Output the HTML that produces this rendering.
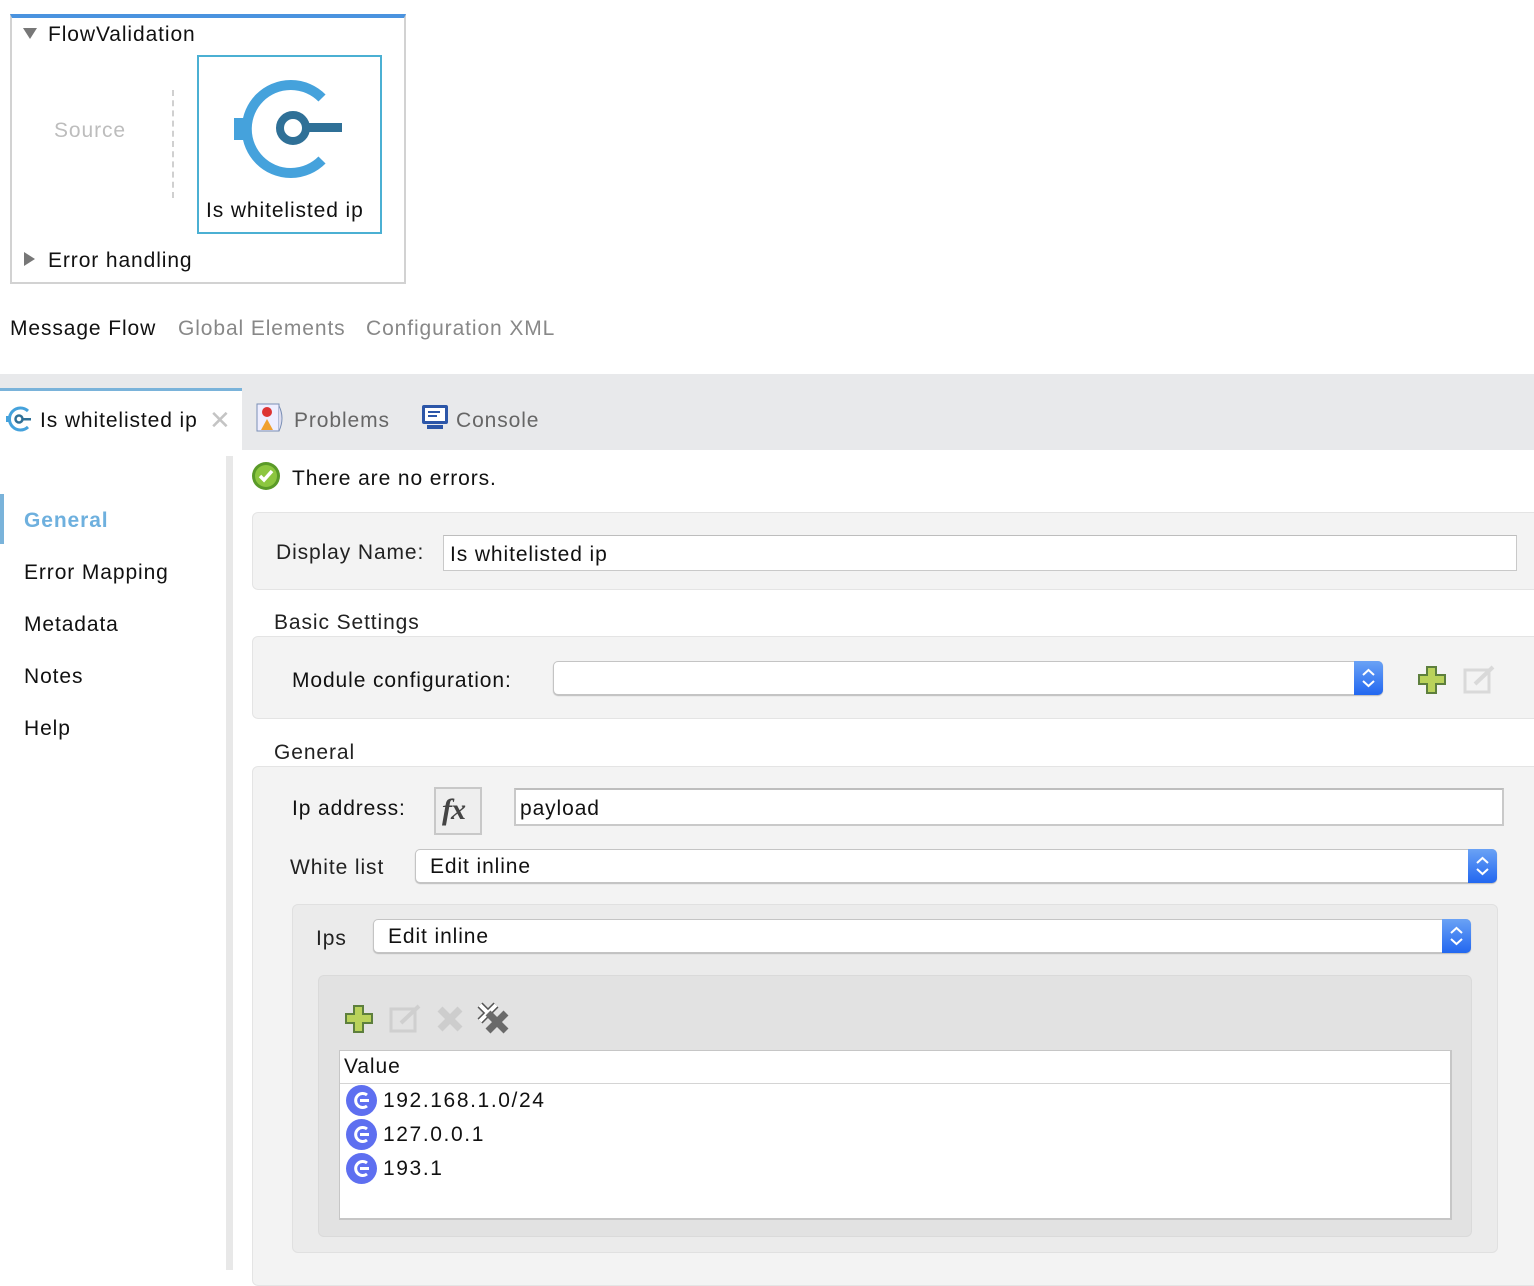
<!DOCTYPE html>
<html><head><meta charset="utf-8"><style>
*{box-sizing:border-box;margin:0;padding:0}
body{width:1534px;height:1270px;position:relative;background:#fff;font-family:"Liberation Sans",sans-serif;font-size:21px;color:#111;overflow:hidden;letter-spacing:0.9px}
.a{position:absolute}
.t{position:absolute;white-space:nowrap;line-height:1}
.panel{position:absolute;background:#f3f3f3;border:1px solid #e4e4e4;border-radius:6px}
.inp{position:absolute;background:#fff;border:2px solid #c9c9c9;border-top-color:#bdbdbd}
.sel{position:absolute;background:#fff;border:1px solid #c4c4c4;border-radius:5px;box-shadow:0 1px 1px #bbb}
.step{position:absolute;right:-1px;top:-1px;bottom:-1px;width:29px;border-radius:0 5px 5px 0;background:linear-gradient(#6aa2f5,#2267f0)}
.step svg{position:absolute;left:7px;top:7px}
.ci{position:absolute;width:31px;height:31px;border-radius:50%;background:#5e6ff0}
</style></head><body>

<!-- flow box -->
<div class="a" style="left:10px;top:14px;width:396px;height:270px;border:2px solid #d2d2d2;border-top:4px solid #4a93df"></div>
<div class="a" style="left:23px;top:28px;width:0;height:0;border-left:7px solid transparent;border-right:7px solid transparent;border-top:11px solid #777"></div>
<div class="t" style="left:48px;top:24px">FlowValidation</div>
<div class="t" style="left:54px;top:120px;color:#bdbdbd">Source</div>
<div class="a" style="left:172px;top:90px;height:108px;border-left:2px dashed #d0d0d0"></div>
<div class="a" style="left:197px;top:55px;width:185px;height:179px;border:2px solid #4bb0d3"></div>
<svg class="a" style="left:232px;top:78px" width="112" height="102" viewBox="0 0 112 102">
<path d="M90 20 A44 44 0 1 0 90 82" fill="none" stroke="#45a2dc" stroke-width="10"/>
<rect x="2" y="40" width="14" height="22" fill="#45a2dc"/>
<circle cx="61" cy="50" r="13" fill="none" stroke="#2f7097" stroke-width="8"/>
<rect x="72" y="45" width="38" height="9" fill="#2f7097"/>
</svg>
<div class="t" style="left:206px;top:200px">Is whitelisted ip</div>
<div class="a" style="left:24px;top:252px;width:0;height:0;border-top:7px solid transparent;border-bottom:7px solid transparent;border-left:11px solid #777"></div>
<div class="t" style="left:48px;top:250px">Error handling</div>

<div class="t" style="left:10px;top:318px">Message Flow</div>
<div class="t" style="left:178px;top:318px;color:#888">Global Elements</div>
<div class="t" style="left:366px;top:318px;color:#888">Configuration XML</div>

<!-- bottom tab bar -->
<div class="a" style="left:0;top:374px;width:1534px;height:76px;background:#e8e9eb"></div>
<div class="a" style="left:0;top:388px;width:242px;height:62px;background:#fff;border-top:3px solid #7ab3da"></div>
<svg class="a" style="left:4px;top:405px" width="30" height="28" viewBox="0 0 30 28">
<path d="M24 6 A11 11 0 1 0 24 22" fill="none" stroke="#45a2dc" stroke-width="3"/>
<rect x="2" y="11" width="4" height="6" fill="#45a2dc"/>
<circle cx="15" cy="14" r="3.5" fill="none" stroke="#2f7097" stroke-width="2.5"/><rect x="18" y="13" width="9" height="2.5" fill="#2f7097"/>
</svg>
<div class="t" style="left:40px;top:410px">Is whitelisted ip</div>
<div class="t" style="left:209px;top:407px;font-size:26px;color:#c4c4c4">✕</div>
<svg class="a" style="left:256px;top:403px" width="30" height="30" viewBox="0 0 30 30">
<rect x="1" y="1" width="22" height="27" fill="#eef" stroke="#7a8fb5"/><path d="M23 3 q6 12 0 25" fill="#dde" stroke="#7a8fb5"/>
<circle cx="11" cy="9" r="5" fill="#d33"/><path d="M5 27 L11 16 L17 27Z" fill="#f0a030"/></svg>
<div class="t" style="left:294px;top:410px;color:#666">Problems</div>
<svg class="a" style="left:421px;top:404px" width="28" height="26" viewBox="0 0 28 26">
<rect x="1" y="1" width="26" height="19" rx="2" fill="#2c56a8"/><rect x="4" y="4" width="20" height="13" fill="#fff"/>
<rect x="7" y="7" width="12" height="2" fill="#2c56a8"/><rect x="7" y="11" width="9" height="2" fill="#2c56a8"/><rect x="6" y="21" width="16" height="4" fill="#2c56a8"/></svg>
<div class="t" style="left:456px;top:410px;color:#666">Console</div>

<!-- sidebar -->
<div class="a" style="left:226px;top:456px;width:7px;height:814px;background:#e8e8e8"></div>
<div class="a" style="left:0;top:494px;width:4px;height:50px;background:#7ab3da"></div>
<div class="t" style="left:24px;top:510px;color:#6eb0de;font-weight:bold">General</div>
<div class="t" style="left:24px;top:562px">Error Mapping</div>
<div class="t" style="left:24px;top:614px">Metadata</div>
<div class="t" style="left:24px;top:666px">Notes</div>
<div class="t" style="left:24px;top:718px">Help</div>

<!-- content -->
<svg class="a" style="left:251px;top:461px" width="30" height="30" viewBox="0 0 30 30">
<circle cx="15" cy="15" r="14" fill="#5a9a28"/><circle cx="15" cy="15" r="11" fill="#8cc63f"/>
<path d="M9 15 L13 19 L21 10" fill="none" stroke="#fff" stroke-width="3.5"/></svg>
<div class="t" style="left:292px;top:468px">There are no errors.</div>

<div class="panel" style="left:252px;top:512px;width:1300px;height:78px"></div>
<div class="t" style="left:276px;top:542px;color:#222">Display Name:</div>
<div class="inp" style="left:443px;top:535px;width:1074px;height:36px;border-width:1px"></div>
<div class="t" style="left:450px;top:544px">Is whitelisted ip</div>

<div class="t" style="left:274px;top:612px;color:#222">Basic Settings</div>
<div class="panel" style="left:252px;top:636px;width:1300px;height:83px"></div>
<div class="t" style="left:292px;top:670px">Module configuration:</div>
<div class="sel" style="left:553px;top:661px;width:830px;height:34px"><div class="step"><svg width="15" height="20" viewBox="0 0 15 20"><path d="M2 7L7.5 2L13 7M2 13L7.5 18L13 13" fill="none" stroke="#fff" stroke-width="2"/></svg></div></div>
<svg class="a" style="left:1418px;top:666px" width="28" height="28" viewBox="0 0 28 28"><path d="M9 1h9v8h9v9h-9v9h-9v-9h-8v-9h8z" fill="#b9d25a" stroke="#5d7f3d" stroke-width="2"/></svg>
<svg class="a" style="left:1463px;top:664px" width="32" height="30" viewBox="0 0 32 30"><rect x="2" y="6" width="24" height="22" fill="none" stroke="#d9d9d9" stroke-width="3"/><path d="M12 20 L30 3" stroke="#d9d9d9" stroke-width="4"/></svg>

<div class="t" style="left:274px;top:742px;color:#222">General</div>
<div class="panel" style="left:252px;top:766px;width:1300px;height:520px"></div>
<div class="t" style="left:292px;top:798px">Ip address:</div>
<div class="a" style="left:434px;top:787px;width:48px;height:48px;background:#eee;border:2px solid #c8c8c8"></div>
<div class="t" style="left:442px;top:795px;font-family:'Liberation Serif',serif;font-style:italic;font-weight:bold;font-size:30px;color:#444;letter-spacing:-1px">fx</div>
<div class="inp" style="left:514px;top:788px;width:990px;height:38px"></div>
<div class="t" style="left:520px;top:798px">payload</div>

<div class="t" style="left:290px;top:857px;color:#222">White list</div>
<div class="sel" style="left:415px;top:849px;width:1082px;height:34px"><div class="step"><svg width="15" height="20" viewBox="0 0 15 20"><path d="M2 7L7.5 2L13 7M2 13L7.5 18L13 13" fill="none" stroke="#fff" stroke-width="2"/></svg></div></div>
<div class="t" style="left:430px;top:856px">Edit inline</div>

<div class="a" style="left:292px;top:904px;width:1206px;height:349px;background:#ebebeb;border:1px solid #e0e0e0;border-radius:6px"></div>
<div class="t" style="left:316px;top:928px;color:#222">Ips</div>
<div class="sel" style="left:373px;top:919px;width:1098px;height:34px"><div class="step"><svg width="15" height="20" viewBox="0 0 15 20"><path d="M2 7L7.5 2L13 7M2 13L7.5 18L13 13" fill="none" stroke="#fff" stroke-width="2"/></svg></div></div>
<div class="t" style="left:388px;top:926px">Edit inline</div>

<div class="a" style="left:318px;top:975px;width:1154px;height:262px;background:#e2e2e2;border:1px solid #dadada;border-radius:6px"></div>
<svg class="a" style="left:345px;top:1005px" width="28" height="28" viewBox="0 0 28 28"><path d="M9 1h9v8h9v9h-9v9h-9v-9h-8v-9h8z" fill="#b9d25a" stroke="#5d7f3d" stroke-width="2"/></svg>
<svg class="a" style="left:389px;top:1003px" width="32" height="30" viewBox="0 0 32 30"><rect x="2" y="6" width="24" height="22" fill="none" stroke="#cfcfcf" stroke-width="3"/><path d="M12 20 L30 3" stroke="#cfcfcf" stroke-width="4"/></svg>
<svg class="a" style="left:436px;top:1005px" width="28" height="28" viewBox="0 0 28 28"><path d="M4 4L24 24M24 4L4 24" stroke="#cdcdcd" stroke-width="7"/></svg>
<svg class="a" style="left:476px;top:1001px" width="34" height="34" viewBox="0 0 34 34"><path d="M4 4L20 20M20 4L4 20" stroke="#555" stroke-width="7"/><path d="M4 4L20 20M20 4L4 20" stroke="#fff" stroke-width="4"/><path d="M12 12L30 30M30 12L12 30" stroke="#6a6a6a" stroke-width="7"/></svg>

<div class="a" style="left:339px;top:1050px;width:1113px;height:170px;background:#fff;border:2px solid #c6c6c6;border-top-width:1px;border-left-width:1px"></div>
<div class="a" style="left:340px;top:1083px;width:1110px;height:1px;background:#d4d4d4"></div>
<div class="t" style="left:344px;top:1056px">Value</div>
<div class="ci" style="left:346px;top:1085px"></div>
<div class="ci" style="left:346px;top:1119px"></div>
<div class="ci" style="left:346px;top:1153px"></div>
<svg class="a" style="left:346px;top:1085px" width="31" height="100" viewBox="0 0 31 100">
<g fill="none" stroke="#fff" stroke-width="3"><path d="M21 10 A7 7 0 1 0 21 21"/><path d="M21 44 A7 7 0 1 0 21 55"/><path d="M21 78 A7 7 0 1 0 21 89"/></g>
<g fill="#fff"><rect x="14" y="14" width="9" height="3"/><rect x="14" y="48" width="9" height="3"/><rect x="14" y="82" width="9" height="3"/></g></svg>
<div class="t" style="left:383px;top:1090px;letter-spacing:1.6px">192.168.1.0/24</div>
<div class="t" style="left:383px;top:1124px;letter-spacing:1.6px">127.0.0.1</div>
<div class="t" style="left:383px;top:1158px;letter-spacing:1.6px">193.1</div>
</body></html>
